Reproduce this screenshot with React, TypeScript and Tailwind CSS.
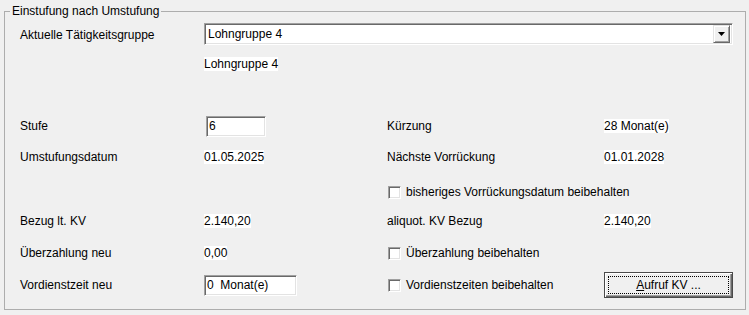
import React from 'react'

const font = { fontFamily: '"Liberation Sans", Arial, sans-serif' }

function Value({ children }: { children: React.ReactNode }) {
  return <span className="bg-white leading-[14px] inline-block">{children}</span>
}

function Field({ w, children }: { w: string; children: React.ReactNode }) {
  return (
    <div
      className={`${w} h-[21px] bg-white border border-t-[#a0a0a0] border-l-[#a0a0a0] border-b-white border-r-white shadow-[inset_1px_1px_0_#696969,inset_-1px_-1px_0_#e3e3e3] flex items-center pl-[2px] whitespace-pre`}
    >
      {children}
    </div>
  )
}

function Check({ label }: { label: string }) {
  return (
    <div className="flex items-center gap-[5px]">
      <div className="w-[13px] h-[13px] bg-white border border-t-[#a0a0a0] border-l-[#a0a0a0] border-b-white border-r-white shadow-[inset_1px_1px_0_#696969,inset_-1px_-1px_0_#e3e3e3]" />
      <span>{label}</span>
    </div>
  )
}

export default function App() {
  return (
    <div className="w-[749px] h-[315px] bg-[#f0f0f0] pt-[4px] pl-[4px] text-[12px] text-black" style={font}>
      <fieldset className="w-[742px] h-[306px] border border-[#adadad]">
        <legend className="ml-[5px] px-[2px] leading-[14px]">Einstufung nach Umstufung</legend>

        <div className="pl-[15px] flex flex-col">
          {/* Tätigkeitsgruppe */}
          <div className="mt-[5px] h-[22px] flex items-center">
            <div className="w-[184px] self-start pt-[3px]">Aktuelle Tätigkeitsgruppe</div>
            <div className="w-[529px] h-[22px] bg-white border border-t-[#a0a0a0] border-l-[#a0a0a0] border-b-white border-r-white shadow-[inset_1px_1px_0_#696969,inset_-1px_-1px_0_#e3e3e3] flex items-center justify-between pl-[3px] pr-[2px]">
              <span>Lohngruppe 4</span>
              <div className="w-[17px] h-[18px] bg-[#f0f0f0] border border-t-[#e3e3e3] border-l-[#e3e3e3] border-b-[#696969] border-r-[#696969] shadow-[inset_1px_1px_0_#fff,inset_-1px_-1px_0_#a0a0a0] flex items-center justify-center">
                <svg width="7" height="4" viewBox="0 0 7 4">
                  <path d="M0 0h7L3.5 4z" fill="#000" />
                </svg>
              </div>
            </div>
          </div>

          <div className="mt-[12px] h-[14px] flex items-center">
            <div className="w-[184px]" />
            <Value>Lohngruppe 4</Value>
          </div>

          {/* Stufe / Kürzung */}
          <div className="mt-[45px] h-[20px] flex items-center">
            <div className="w-[186px]">Stufe</div>
            <div className="w-[181px]">
              <Field w="w-[60px]">6</Field>
            </div>
            <div className="w-[217px]">Kürzung</div>
            <Value>28 Monat(e)</Value>
          </div>

          <div className="mt-[14px] h-[14px] flex items-center">
            <div className="w-[184px]">Umstufungsdatum</div>
            <div className="w-[183px]"><Value>01.05.2025</Value></div>
            <div className="w-[217px]">Nächste Vorrückung</div>
            <Value>01.01.2028</Value>
          </div>

          <div className="mt-[21px] h-[14px] flex items-center">
            <div className="w-[368px]" />
            <Check label="bisheriges Vorrückungsdatum beibehalten" />
          </div>

          <div className="mt-[15px] h-[14px] flex items-center">
            <div className="w-[184px]">Bezug lt. KV</div>
            <div className="w-[183px]"><Value>2.140,20</Value></div>
            <div className="w-[217px]">aliquot. KV Bezug</div>
            <Value>2.140,20</Value>
          </div>

          <div className="mt-[18px] h-[14px] flex items-center">
            <div className="w-[184px]">Überzahlung neu</div>
            <div className="w-[184px]"><Value>0,00</Value></div>
            <Check label="Überzahlung beibehalten" />
          </div>

          <div className="mt-[12px] h-[26px] flex items-center">
            <div className="w-[184px]">Vordienstzeit neu</div>
            <div className="w-[184px]">
              <Field w="w-[93px]">0  Monat(e)</Field>
            </div>
            <div className="w-[216px]">
              <Check label="Vordienstzeiten beibehalten" />
            </div>
            <button className="w-[129px] h-[26px] bg-[#f0f0f0] border border-[#4a4a4a] shadow-[inset_1px_1px_0_#fff,inset_-1px_-1px_0_#696969,inset_-2px_-2px_0_#a0a0a0] p-[3px]">
              <div className="w-full h-full border border-dotted border-black flex items-center justify-center">
                <span><span className="underline">A</span>ufruf KV ...</span>
              </div>
            </button>
          </div>
        </div>
      </fieldset>
    </div>
  )
}
